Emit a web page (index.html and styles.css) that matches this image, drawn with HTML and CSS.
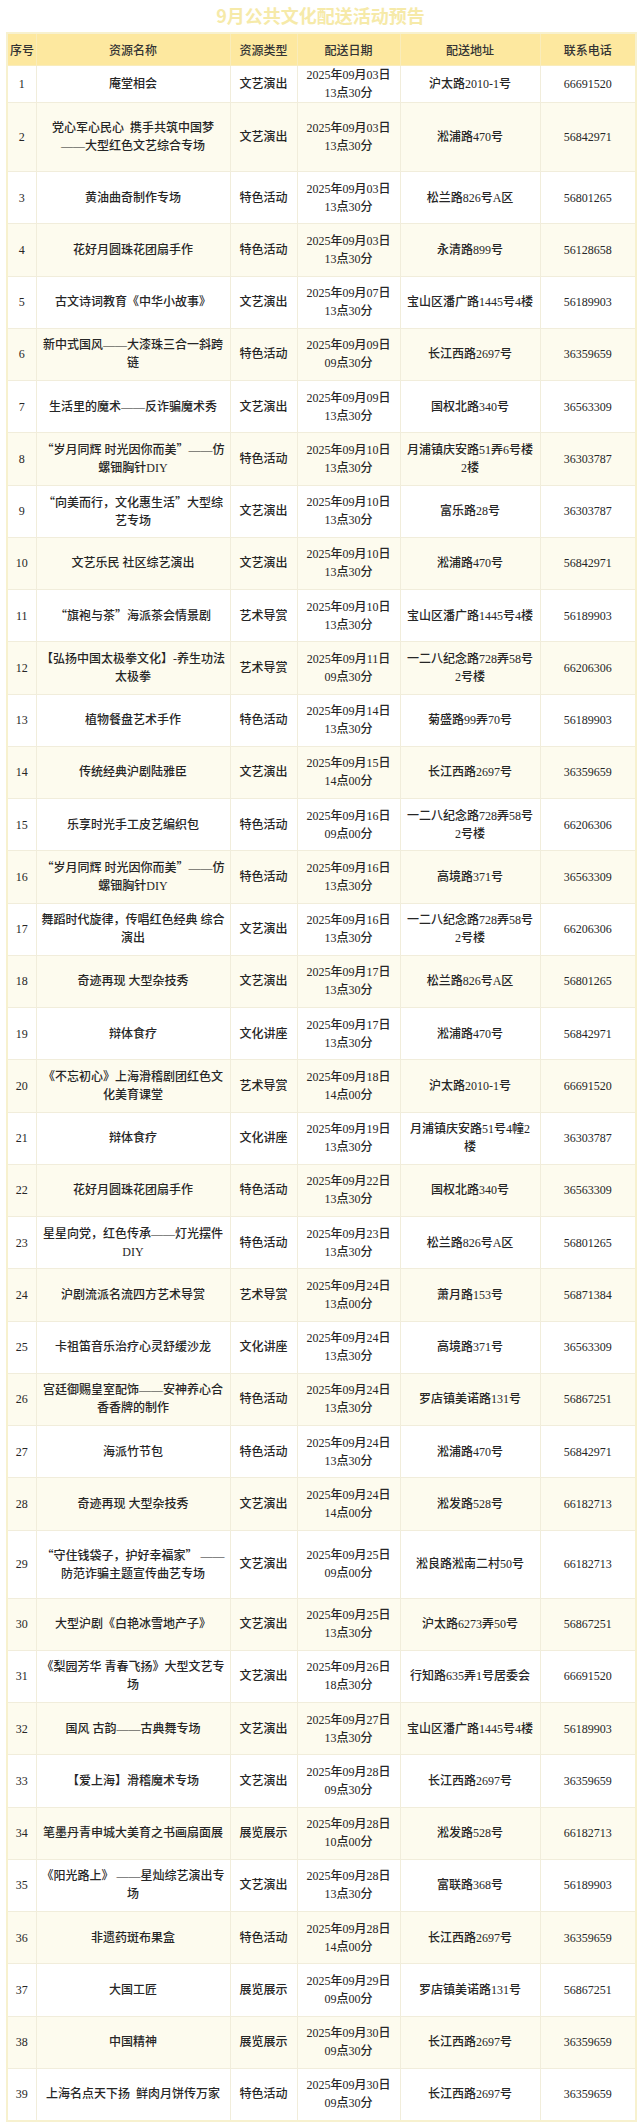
FILE: index.html
```html
<!DOCTYPE html>
<html lang="zh-CN">
<head>
<meta charset="utf-8">
<title>9月公共文化配送活动预告</title>
<link rel="stylesheet" href="styles.css">
</head>
<body>
<div class="page">
  <div class="title">9月公共文化配送活动预告</div>
  <table class="sched">
    <colgroup>
      <col class="c-no"><col class="c-name"><col class="c-type"><col class="c-date"><col class="c-addr"><col class="c-tel">
    </colgroup>
    <thead>
      <tr><th>序号</th><th>资源名称</th><th>资源类型</th><th>配送日期</th><th>配送地址</th><th>联系电话</th></tr>
    </thead>
    <tbody>
      <tr class="r-short"><td class="no">1</td><td class="nm">庵堂相会</td><td class="tp">文艺演出</td><td class="dt">2025年09月03日<br>13点30分</td><td class="ad">沪太路2010-1号</td><td class="tel">66691520</td></tr>
      <tr class="r-tall"><td class="no">2</td><td class="nm">党心军心民心&nbsp;&nbsp;携手共筑中国梦<br>——大型红色文艺综合专场</td><td class="tp">文艺演出</td><td class="dt">2025年09月03日<br>13点30分</td><td class="ad">淞浦路470号</td><td class="tel">56842971</td></tr>
      <tr><td class="no">3</td><td class="nm">黄油曲奇制作专场</td><td class="tp">特色活动</td><td class="dt">2025年09月03日<br>13点30分</td><td class="ad">松兰路826号A区</td><td class="tel">56801265</td></tr>
      <tr><td class="no">4</td><td class="nm">花好月圆珠花团扇手作</td><td class="tp">特色活动</td><td class="dt">2025年09月03日<br>13点30分</td><td class="ad">永清路899号</td><td class="tel">56128658</td></tr>
      <tr><td class="no">5</td><td class="nm">古文诗词教育《中华小故事》</td><td class="tp">文艺演出</td><td class="dt">2025年09月07日<br>13点30分</td><td class="ad">宝山区潘广路1445号4楼</td><td class="tel">56189903</td></tr>
      <tr><td class="no">6</td><td class="nm">新中式国风——大漆珠三合一斜跨<br>链</td><td class="tp">特色活动</td><td class="dt">2025年09月09日<br>09点30分</td><td class="ad">长江西路2697号</td><td class="tel">36359659</td></tr>
      <tr><td class="no">7</td><td class="nm">生活里的魔术——反诈骗魔术秀</td><td class="tp">文艺演出</td><td class="dt">2025年09月09日<br>13点30分</td><td class="ad">国权北路340号</td><td class="tel">36563309</td></tr>
      <tr><td class="no">8</td><td class="nm"><span class="q">“</span>岁月同辉 时光因你而美<span class="q">”</span>——仿<br>螺钿胸针DIY</td><td class="tp">特色活动</td><td class="dt">2025年09月10日<br>13点30分</td><td class="ad">月浦镇庆安路51弄6号楼<br>2楼</td><td class="tel">36303787</td></tr>
      <tr><td class="no">9</td><td class="nm"><span class="q">“</span>向美而行，文化惠生活<span class="q">”</span>大型综<br>艺专场</td><td class="tp">文艺演出</td><td class="dt">2025年09月10日<br>13点30分</td><td class="ad">富乐路28号</td><td class="tel">36303787</td></tr>
      <tr><td class="no">10</td><td class="nm">文艺乐民 社区综艺演出</td><td class="tp">文艺演出</td><td class="dt">2025年09月10日<br>13点30分</td><td class="ad">淞浦路470号</td><td class="tel">56842971</td></tr>
      <tr><td class="no">11</td><td class="nm"><span class="q">“</span>旗袍与茶<span class="q">”</span>海派茶会情景剧</td><td class="tp">艺术导赏</td><td class="dt">2025年09月10日<br>13点30分</td><td class="ad">宝山区潘广路1445号4楼</td><td class="tel">56189903</td></tr>
      <tr><td class="no">12</td><td class="nm">【弘扬中国太极拳文化】-养生功法<br>太极拳</td><td class="tp">艺术导赏</td><td class="dt">2025年09月11日<br>09点30分</td><td class="ad">一二八纪念路728弄58号<br>2号楼</td><td class="tel">66206306</td></tr>
      <tr><td class="no">13</td><td class="nm">植物餐盘艺术手作</td><td class="tp">特色活动</td><td class="dt">2025年09月14日<br>13点30分</td><td class="ad">菊盛路99弄70号</td><td class="tel">56189903</td></tr>
      <tr><td class="no">14</td><td class="nm">传统经典沪剧陆雅臣</td><td class="tp">文艺演出</td><td class="dt">2025年09月15日<br>14点00分</td><td class="ad">长江西路2697号</td><td class="tel">36359659</td></tr>
      <tr><td class="no">15</td><td class="nm">乐享时光手工皮艺编织包</td><td class="tp">特色活动</td><td class="dt">2025年09月16日<br>09点00分</td><td class="ad">一二八纪念路728弄58号<br>2号楼</td><td class="tel">66206306</td></tr>
      <tr><td class="no">16</td><td class="nm"><span class="q">“</span>岁月同辉 时光因你而美<span class="q">”</span>——仿<br>螺钿胸针DIY</td><td class="tp">特色活动</td><td class="dt">2025年09月16日<br>13点30分</td><td class="ad">高境路371号</td><td class="tel">36563309</td></tr>
      <tr><td class="no">17</td><td class="nm">舞蹈时代旋律，传唱红色经典 综合<br>演出</td><td class="tp">文艺演出</td><td class="dt">2025年09月16日<br>13点30分</td><td class="ad">一二八纪念路728弄58号<br>2号楼</td><td class="tel">66206306</td></tr>
      <tr><td class="no">18</td><td class="nm">奇迹再现 大型杂技秀</td><td class="tp">文艺演出</td><td class="dt">2025年09月17日<br>13点30分</td><td class="ad">松兰路826号A区</td><td class="tel">56801265</td></tr>
      <tr><td class="no">19</td><td class="nm">辩体食疗</td><td class="tp">文化讲座</td><td class="dt">2025年09月17日<br>13点30分</td><td class="ad">淞浦路470号</td><td class="tel">56842971</td></tr>
      <tr><td class="no">20</td><td class="nm">《不忘初心》上海滑稽剧团红色文<br>化美育课堂</td><td class="tp">艺术导赏</td><td class="dt">2025年09月18日<br>14点00分</td><td class="ad">沪太路2010-1号</td><td class="tel">66691520</td></tr>
      <tr><td class="no">21</td><td class="nm">辩体食疗</td><td class="tp">文化讲座</td><td class="dt">2025年09月19日<br>13点30分</td><td class="ad">月浦镇庆安路51号4幢2<br>楼</td><td class="tel">36303787</td></tr>
      <tr><td class="no">22</td><td class="nm">花好月圆珠花团扇手作</td><td class="tp">特色活动</td><td class="dt">2025年09月22日<br>13点30分</td><td class="ad">国权北路340号</td><td class="tel">36563309</td></tr>
      <tr><td class="no">23</td><td class="nm">星星向党，红色传承——灯光摆件<br>DIY</td><td class="tp">特色活动</td><td class="dt">2025年09月23日<br>13点30分</td><td class="ad">松兰路826号A区</td><td class="tel">56801265</td></tr>
      <tr><td class="no">24</td><td class="nm">沪剧流派名流四方艺术导赏</td><td class="tp">艺术导赏</td><td class="dt">2025年09月24日<br>13点00分</td><td class="ad">萧月路153号</td><td class="tel">56871384</td></tr>
      <tr><td class="no">25</td><td class="nm">卡祖笛音乐治疗心灵舒缓沙龙</td><td class="tp">文化讲座</td><td class="dt">2025年09月24日<br>13点30分</td><td class="ad">高境路371号</td><td class="tel">36563309</td></tr>
      <tr><td class="no">26</td><td class="nm">宫廷御赐皇室配饰——安神养心合<br>香香牌的制作</td><td class="tp">特色活动</td><td class="dt">2025年09月24日<br>13点30分</td><td class="ad">罗店镇美诺路131号</td><td class="tel">56867251</td></tr>
      <tr><td class="no">27</td><td class="nm">海派竹节包</td><td class="tp">特色活动</td><td class="dt">2025年09月24日<br>13点30分</td><td class="ad">淞浦路470号</td><td class="tel">56842971</td></tr>
      <tr><td class="no">28</td><td class="nm">奇迹再现 大型杂技秀</td><td class="tp">文艺演出</td><td class="dt">2025年09月24日<br>14点00分</td><td class="ad">淞发路528号</td><td class="tel">66182713</td></tr>
      <tr class="r-tall2"><td class="no">29</td><td class="nm"><span class="q">“</span>守住钱袋子，护好幸福家<span class="q">”</span> ——<br>防范诈骗主题宣传曲艺专场</td><td class="tp">文艺演出</td><td class="dt">2025年09月25日<br>09点00分</td><td class="ad">淞良路淞南二村50号</td><td class="tel">66182713</td></tr>
      <tr><td class="no">30</td><td class="nm">大型沪剧《白艳冰雪地产子》</td><td class="tp">文艺演出</td><td class="dt">2025年09月25日<br>13点30分</td><td class="ad">沪太路6273弄50号</td><td class="tel">56867251</td></tr>
      <tr><td class="no">31</td><td class="nm">《梨园芳华 青春飞扬》大型文艺专<br>场</td><td class="tp">文艺演出</td><td class="dt">2025年09月26日<br>18点30分</td><td class="ad">行知路635弄1号居委会</td><td class="tel">66691520</td></tr>
      <tr><td class="no">32</td><td class="nm">国风 古韵——古典舞专场</td><td class="tp">文艺演出</td><td class="dt">2025年09月27日<br>13点30分</td><td class="ad">宝山区潘广路1445号4楼</td><td class="tel">56189903</td></tr>
      <tr><td class="no">33</td><td class="nm">【爱上海】滑稽魔术专场</td><td class="tp">文艺演出</td><td class="dt">2025年09月28日<br>09点30分</td><td class="ad">长江西路2697号</td><td class="tel">36359659</td></tr>
      <tr><td class="no">34</td><td class="nm">笔墨丹青申城大美育之书画扇面展</td><td class="tp">展览展示</td><td class="dt">2025年09月28日<br>10点00分</td><td class="ad">淞发路528号</td><td class="tel">66182713</td></tr>
      <tr><td class="no">35</td><td class="nm">《阳光路上》 ——星灿综艺演出专<br>场</td><td class="tp">文艺演出</td><td class="dt">2025年09月28日<br>13点30分</td><td class="ad">富联路368号</td><td class="tel">56189903</td></tr>
      <tr><td class="no">36</td><td class="nm">非遗药斑布果盒</td><td class="tp">特色活动</td><td class="dt">2025年09月28日<br>14点00分</td><td class="ad">长江西路2697号</td><td class="tel">36359659</td></tr>
      <tr><td class="no">37</td><td class="nm">大国工匠</td><td class="tp">展览展示</td><td class="dt">2025年09月29日<br>09点00分</td><td class="ad">罗店镇美诺路131号</td><td class="tel">56867251</td></tr>
      <tr><td class="no">38</td><td class="nm">中国精神</td><td class="tp">展览展示</td><td class="dt">2025年09月30日<br>09点30分</td><td class="ad">长江西路2697号</td><td class="tel">36359659</td></tr>
      <tr><td class="no">39</td><td class="nm">上海名点天下扬&nbsp;&nbsp;鲜肉月饼传万家</td><td class="tp">特色活动</td><td class="dt">2025年09月30日<br>09点30分</td><td class="ad">长江西路2697号</td><td class="tel">36359659</td></tr>
    </tbody>
  </table>
</div>
</body>
</html>
```

FILE: styles.css
```css
html, body {
  margin: 0;
  padding: 0;
  background: #ffffff;
}

body {
  font-family: "Liberation Serif", "Noto Sans CJK SC", serif;
  color: #262626;
}

.page {
  padding: 0 5px 0 6px;
}

.title {
  height: 32px;
  line-height: 30px;
  text-align: center;
  font-family: "Noto Sans CJK SC", sans-serif;
  font-size: 18px;
  font-weight: 700;
  color: #f6eaa9;
}

.sched {
  width: 629px;
  border-collapse: collapse;
  table-layout: fixed;
  border: 2px solid #f7f1cf;
}

.c-no { width: 29px; }
.c-name { width: 194px; }
.c-type { width: 67px; }
.c-date { width: 103px; }
.c-addr { width: 140px; }
.c-tel { width: 96px; }

.sched th,
.sched td {
  border: 1px solid #f1eddb;
  padding: 0 2px;
  text-align: center;
  vertical-align: middle;
  white-space: nowrap;
  font-size: 12px;
  line-height: 18px;
  font-weight: 500;
}

.sched th {
  height: 31px;
  background: #fde89f;
  border-color: #f9ecbb;
  color: #333333;
  font-family: "Noto Sans CJK SC", sans-serif;
}

.sched tbody tr {
  height: 52.25px;
}

.sched tbody tr.r-short { height: 34px; }
.sched tbody tr.r-tall { height: 69px; }
.sched tbody tr.r-tall2 { height: 68px; }

.sched tbody tr:nth-child(even) td {
  background: #fdfbee;
}

.no { font-size: 13.5px; }
.dt { font-size: 13.5px; }
.ad { font-size: 12.5px; }
.tel { font-size: 14.5px; }

.q {
  font-family: "Noto Sans CJK SC", sans-serif;
}
```
